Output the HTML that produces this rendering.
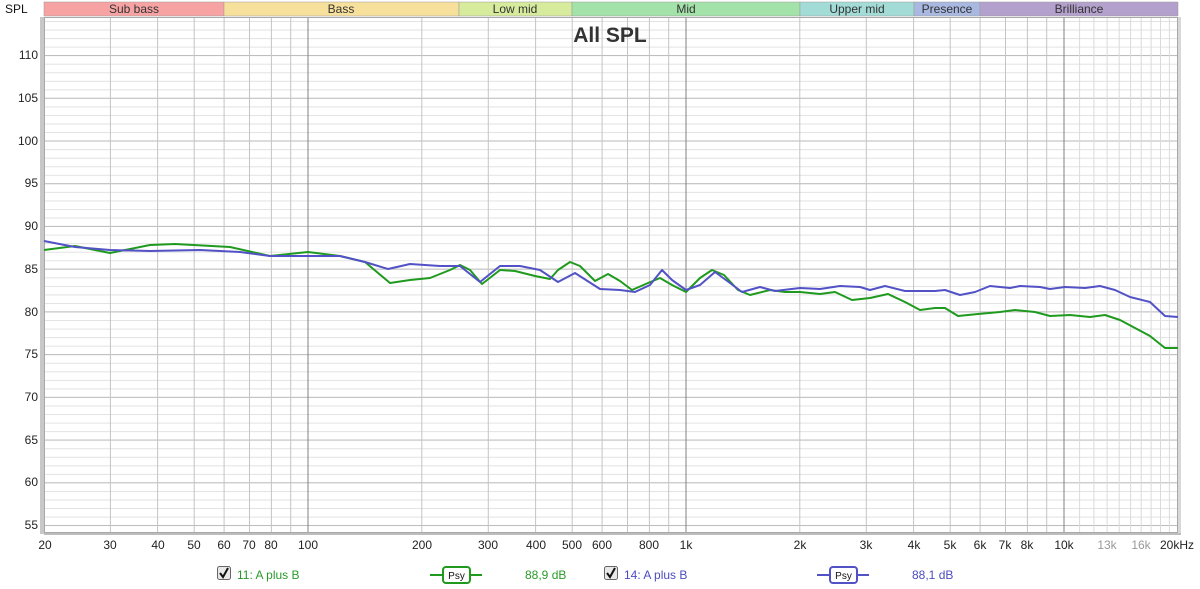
<!DOCTYPE html>
<html><head><meta charset="utf-8"><style>
body{margin:0;width:1200px;height:589px;background:#fff;overflow:hidden;font-family:"Liberation Sans",sans-serif}
svg{position:absolute;left:0;top:0}
</style></head><body>
<svg width="1200" height="589" viewBox="0 0 1200 589" font-family="Liberation Sans, sans-serif">
<defs>
<pattern id="hmin" x="0" y="3.9" width="10" height="8.545" patternUnits="userSpaceOnUse"><line x1="0" y1="0.5" x2="10" y2="0.5" stroke="#e2e2e2" stroke-width="1"/></pattern>
<pattern id="hmaj" x="0" y="12.27" width="10" height="42.727" patternUnits="userSpaceOnUse"><line x1="0" y1="0.5" x2="10" y2="0.5" stroke="#bdbdbd" stroke-width="1"/></pattern>
</defs>
<!-- band bar -->
<g font-size="12" fill="#333" text-anchor="middle" stroke="#999" stroke-width="0.5">
<rect x="44" y="2" width="180" height="14" fill="#f8a3a3"/>
<rect x="224" y="2" width="235" height="14" fill="#f7e09c"/>
<rect x="459" y="2" width="113" height="14" fill="#d7eb9c"/>
<rect x="572" y="2" width="228" height="14" fill="#a3e2a8"/>
<rect x="800" y="2" width="114" height="14" fill="#a3dcd6"/>
<rect x="914" y="2" width="66" height="14" fill="#a8b8e0"/>
<rect x="980" y="2" width="198" height="14" fill="#b4a0cc"/>
</g>
<g font-size="12" fill="#333" text-anchor="middle">
<text x="134" y="13">Sub bass</text><text x="341" y="13">Bass</text><text x="515" y="13">Low mid</text><text x="686" y="13">Mid</text><text x="857" y="13">Upper mid</text><text x="947" y="13">Presence</text><text x="1079" y="13">Brilliance</text>
</g>
<text x="5" y="13" font-size="12" fill="#111">SPL</text>
<!-- plot -->
<rect x="40" y="17" width="4" height="517" fill="#c8c8c8"/>
<rect x="44" y="17" width="1134" height="516" fill="#fff"/>
<rect x="44" y="17" width="1134" height="516" fill="url(#hmin)"/>
<rect x="44" y="17" width="1134" height="516" fill="url(#hmaj)"/>
<g stroke="#c4c4c4" stroke-width="1">
<line x1="110.4" y1="17" x2="110.4" y2="533"/><line x1="157.6" y1="17" x2="157.6" y2="533"/><line x1="194.2" y1="17" x2="194.2" y2="533"/><line x1="224.1" y1="17" x2="224.1" y2="533"/><line x1="249.5" y1="17" x2="249.5" y2="533"/><line x1="271.4" y1="17" x2="271.4" y2="533"/><line x1="290.7" y1="17" x2="290.7" y2="533"/>
<line x1="421.8" y1="17" x2="421.8" y2="533"/><line x1="488.3" y1="17" x2="488.3" y2="533"/><line x1="535.6" y1="17" x2="535.6" y2="533"/><line x1="572.2" y1="17" x2="572.2" y2="533"/><line x1="602.1" y1="17" x2="602.1" y2="533"/><line x1="627.5" y1="17" x2="627.5" y2="533"/><line x1="649.4" y1="17" x2="649.4" y2="533"/><line x1="668.7" y1="17" x2="668.7" y2="533"/>
<line x1="799.8" y1="17" x2="799.8" y2="533"/><line x1="866.3" y1="17" x2="866.3" y2="533"/><line x1="913.6" y1="17" x2="913.6" y2="533"/><line x1="950.2" y1="17" x2="950.2" y2="533"/><line x1="980.1" y1="17" x2="980.1" y2="533"/><line x1="1005.5" y1="17" x2="1005.5" y2="533"/><line x1="1027.4" y1="17" x2="1027.4" y2="533"/><line x1="1046.7" y1="17" x2="1046.7" y2="533"/>
</g>
<g stroke="#dadada" stroke-width="1">
<line x1="1079.6" y1="17" x2="1079.6" y2="533"/><line x1="1093.9" y1="17" x2="1093.9" y2="533"/><line x1="1107.1" y1="17" x2="1107.1" y2="533"/><line x1="1119.2" y1="17" x2="1119.2" y2="533"/><line x1="1130.6" y1="17" x2="1130.6" y2="533"/><line x1="1141.2" y1="17" x2="1141.2" y2="533"/><line x1="1151.1" y1="17" x2="1151.1" y2="533"/><line x1="1160.5" y1="17" x2="1160.5" y2="533"/><line x1="1169.4" y1="17" x2="1169.4" y2="533"/>
</g>
<g stroke="#808080" stroke-width="1">
<line x1="308" y1="17" x2="308" y2="533"/><line x1="686" y1="17" x2="686" y2="533"/><line x1="1064" y1="17" x2="1064" y2="533"/>
</g>
<rect x="44.5" y="17.5" width="1133" height="515" fill="none" stroke="#a8a8a8"/>
<rect x="1178" y="17" width="3" height="518" fill="#d8d8d8"/>
<rect x="44" y="533" width="1137" height="2" fill="#bdbdbd"/>
<text x="610" y="42" font-size="21" font-weight="bold" fill="#333" text-anchor="middle">All SPL</text>
<!-- curves -->
<polyline fill="none" stroke="#1f9a1f" stroke-width="2" stroke-linejoin="round" points="44,250 75,246 110,253 150,245 175,244 230,247 270,256 308,252 340,256 365,262 390,283 410,280 430,278 450,270 460,265 470,270 482,284 500,270 515,271 535,276 550,279 558,270 570,262 580,266 595,281 608,274 620,281 632,290 648,283 660,278 672,285 686,292 700,278 712,270 724,275 738,290 750,295 770,290 785,292 800,292 820,294 835,292 852,300 870,298 888,294 905,302 920,310 935,308 945,308 958,316 978,314 1000,312 1015,310 1035,312 1050,316 1070,315 1090,317 1105,315 1120,320 1135,328 1150,336 1165,348 1178,348"/>
<polyline fill="none" stroke="#5252c6" stroke-width="2" stroke-linejoin="round" points="44,241 75,247 110,250 150,251 200,250 240,252 270,256 308,256 340,256 365,262 388,269 410,264 440,266 460,266 480,282 500,266 520,266 540,270 558,282 575,273 600,289 620,290 635,292 650,285 662,270 672,280 686,290 700,285 715,272 730,283 742,292 760,287 775,291 800,288 820,289 840,286 860,287 870,290 885,286 905,291 920,291 935,291 945,290 960,295 975,292 990,286 1010,288 1020,286 1040,287 1050,289 1065,287 1085,288 1100,286 1115,290 1130,297 1150,302 1165,316 1178,317"/>
<!-- y labels -->
<g font-size="12" fill="#222" text-anchor="end">
<text x="38" y="59">110</text><text x="38" y="102">105</text><text x="38" y="145">100</text><text x="38" y="187">95</text><text x="38" y="230">90</text><text x="38" y="273">85</text><text x="38" y="316">80</text><text x="38" y="358">75</text><text x="38" y="401">70</text><text x="38" y="444">65</text><text x="38" y="486">60</text><text x="38" y="529">55</text>
</g>
<!-- x labels -->
<g font-size="12" fill="#222" text-anchor="middle">
<text x="45" y="549">20</text><text x="110" y="549">30</text><text x="158" y="549">40</text><text x="194" y="549">50</text><text x="224" y="549">60</text><text x="249" y="549">70</text><text x="271" y="549">80</text><text x="308" y="549">100</text>
<text x="422" y="549">200</text><text x="488" y="549">300</text><text x="536" y="549">400</text><text x="572" y="549">500</text><text x="602" y="549">600</text><text x="649" y="549">800</text><text x="686" y="549">1k</text>
<text x="800" y="549">2k</text><text x="866" y="549">3k</text><text x="914" y="549">4k</text><text x="950" y="549">5k</text><text x="980" y="549">6k</text><text x="1005" y="549">7k</text><text x="1027" y="549">8k</text><text x="1064" y="549">10k</text>
<text x="1107" y="549" fill="#999">13k</text><text x="1141" y="549" fill="#999">16k</text><text x="1177" y="549">20kHz</text>
</g>
<!-- legend -->
<g>
<rect x="217.5" y="566.5" width="13" height="13" rx="2" fill="#e8e8e8" stroke="#666"/>
<path d="M220,573 L223,577 L228,568" fill="none" stroke="#111" stroke-width="2"/>
<text x="237" y="579" font-size="12" fill="#2a9a2a">11: A plus B</text>
<line x1="430" y1="575" x2="482" y2="575" stroke="#1f9a1f" stroke-width="2"/>
<rect x="443" y="567" width="27" height="16" rx="3" fill="#fff" stroke="#1f9a1f" stroke-width="2"/>
<text x="456.5" y="579" font-size="10" fill="#111" text-anchor="middle">Psy</text>
<text x="525" y="579" font-size="12" fill="#2a9a2a">88,9 dB</text>
<rect x="604.5" y="566.5" width="13" height="13" rx="2" fill="#e8e8e8" stroke="#666"/>
<path d="M607,573 L610,577 L615,568" fill="none" stroke="#111" stroke-width="2"/>
<text x="624" y="579" font-size="12" fill="#4c4cc0">14: A plus B</text>
<line x1="817" y1="575" x2="869" y2="575" stroke="#5252c6" stroke-width="2"/>
<rect x="830" y="567" width="27" height="16" rx="3" fill="#fff" stroke="#5252c6" stroke-width="2"/>
<text x="843.5" y="579" font-size="10" fill="#111" text-anchor="middle">Psy</text>
<text x="912" y="579" font-size="12" fill="#4c4cc0">88,1 dB</text>
</g>
</svg>
</body></html>
